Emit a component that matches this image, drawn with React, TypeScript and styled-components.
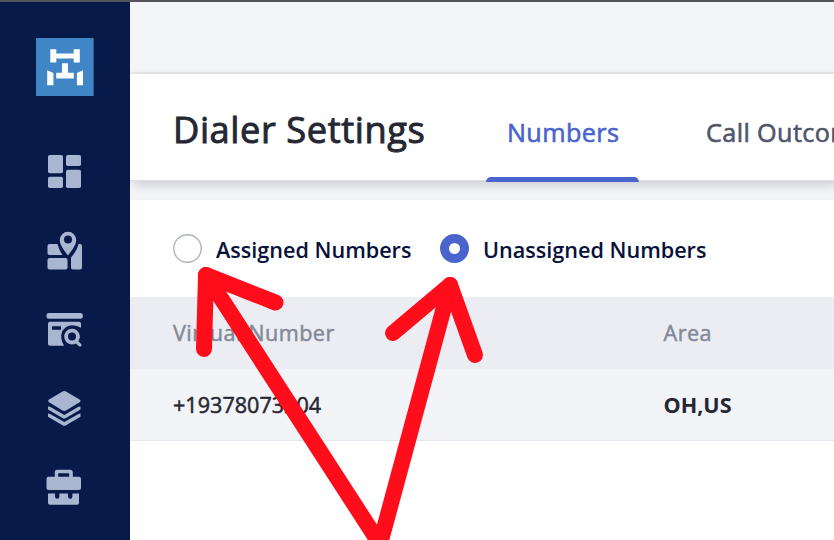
import React from "react";
import styled, { createGlobalStyle } from "styled-components";

const GlobalStyle = createGlobalStyle`
  * { box-sizing: border-box; }
  html, body { margin: 0; overflow: hidden; }
  body { font-family: "Open Sans", sans-serif; background: #fff; }
`;

const Page = styled.div`
  position: relative;
  display: flex;
  width: 834px;
  height: 540px;
  overflow: hidden;
  border-top: 2px solid #555557;
`;

const Sidebar = styled.nav`
  flex: 0 0 130px;
  display: flex;
  flex-direction: column;
  background: #071a4a;
  padding-top: 36px;
`;

const Logo = styled.svg`
  width: 58px;
  height: 58px;
  margin-left: 36px;
  margin-bottom: 36px;
  flex: none;
`;

const NavItem = styled.a`
  display: flex;
  align-items: center;
  height: 79px;
  padding-left: 44px;
  flex: none;
`;

const NavIcon = styled.svg`
  width: 40px;
  height: 41px;
  fill: #a9b6d2;
`;

const Main = styled.main`
  flex: 1;
  min-width: 0;
  display: flex;
  flex-direction: column;
  background: #f4f5f8;
  overflow: hidden;
`;

const TopBar = styled.div`
  height: 72px;
  flex: none;
  border-bottom: 2px solid #e8e8eb;
`;

const Header = styled.header`
  display: flex;
  flex: none;
  height: 107px;
  background: #fff;
  border-bottom: 1px solid #dedee3;
  box-shadow: 4px 4px 10px rgba(40, 40, 60, 0.2);
  padding-left: 43px;
  margin-bottom: 19px;
`;

const Title = styled.h1`
  width: 313px;
  flex: none;
  margin: 0;
  color: #252733;
  font-size: 36.3px;
  font-weight: 500;
  letter-spacing: 0.55px;
  line-height: 110px;
  -webkit-text-stroke: 0.9px currentColor;
  white-space: nowrap;
`;

const Tab = styled.a<{ $active?: boolean }>`
  flex: none;
  display: flex;
  flex-direction: column;
  justify-content: space-between;
  width: ${(p) => (p.$active ? 153 : 200)}px;
  margin-right: 46px;
  height: 108px;
  padding-left: 21px;
  color: ${(p) => (p.$active ? "#4a64ce" : "#4f566c")};
  font-size: 25.2px;
  font-weight: 500;
  letter-spacing: 0.4px;
  line-height: 117px;
  white-space: nowrap;
  &::after {
    content: "";
    display: ${(p) => (p.$active ? "block" : "none")};
    height: 5px;
    flex: none;
    margin-left: -21px;
    border-radius: 5px 5px 0 0;
    background: #4a64ce;
  }
`;

const TabLabel = styled.span`
  height: 100px;
  -webkit-text-stroke: 0.6px currentColor;
`;

const Panel = styled.section`
  flex: 1;
  background: #fff;
`;

const RadioGroup = styled.div`
  display: flex;
  height: 97px;
  padding: 0 43px;
`;

const RadioOption = styled.label<{ $width: number }>`
  display: flex;
  align-items: center;
  width: ${(p) => p.$width}px;
  color: #07113a;
  font-size: 21.6px;
  font-weight: 600;
  white-space: nowrap;
`;

const RadioDot = styled.span<{ $checked?: boolean }>`
  flex: none;
  width: 29px;
  height: 29px;
  margin-right: 14px;
  border-radius: 50%;
  background: #fff;
  border: ${(p) => (p.$checked ? "9px solid #4a64ce" : "0 solid transparent")};
  box-shadow: ${(p) => (p.$checked ? "none" : "inset 0 0 0 1.4px #b0b4c0")};
`;

const RadioText = styled.span`
  padding-top: 1px;
`;

const Row = styled.div<{ $head?: boolean }>`
  display: grid;
  grid-template-columns: 490.5px 1fr;
  align-items: center;
  height: 72px;
  padding-left: 43px;
  padding-bottom: ${(p) => (p.$head ? "2px" : "0")};
  background: ${(p) => (p.$head ? "#ecedf3" : "#f3f4f8")};
  border-bottom: ${(p) => (p.$head ? "0" : "1px solid #e3e8ee")};
  color: ${(p) => (p.$head ? "#838998" : "#252733")};
  font-size: 21.6px;
  font-weight: 500;
  letter-spacing: ${(p) => (p.$head ? "0.5px" : "0")};
`;

const Cell = styled.span<{ $bold?: boolean }>`
  font-weight: ${(p) => (p.$bold ? 700 : "inherit")};
  -webkit-text-stroke: ${(p) => (p.$bold ? "0" : "0.5px currentColor")};
  white-space: nowrap;
`;

const Arrows = styled.svg`
  position: absolute;
  left: 0;
  top: -2px;
  width: 834px;
  height: 540px;
  pointer-events: none;
  fill: none;
  stroke: #ff0d1a;
  stroke-width: 16;
  stroke-linecap: round;
  stroke-linejoin: round;
`;

const icons: { name: string; box: string; art: React.ReactNode }[] = [
  {
    name: "Dashboard",
    box: "44 151 40 41",
    art: (
      <>
        <rect x="48" y="155" width="15" height="18.3" rx="1.8" />
        <rect x="66" y="155" width="15" height="11" rx="1.8" />
        <rect x="48" y="176.8" width="15" height="11.2" rx="1.8" />
        <rect x="66" y="169.8" width="15" height="18.2" rx="1.8" />
      </>
    ),
  },
  {
    name: "Map",
    box: "44 230 40 41",
    art: (
      <>
        <path d="M49.5 244H57.5Q59 250 62.5 255H49.5Q47.5 255 47.5 253V246Q47.5 244 49.5 244Z" />
        <rect x="47.5" y="258" width="20" height="11.6" rx="2" />
        <path d="M78.5 244H80Q82 244 82 246V267.6Q82 269.6 80 269.6H73Q71 269.6 71 267.6V257.5Q77 250.5 78.5 244Z" />
        <path
          fillRule="evenodd"
          d="M68 231.8A8.2 8.2 0 0 0 59.8 240C59.8 245.8 65.8 252.3 68 255.5C70.2 252.3 76.2 245.8 76.2 240A8.2 8.2 0 0 0 68 231.8ZM68 235.6A4 4 0 1 1 68 243.6A4 4 0 1 1 68 235.6Z"
        />
      </>
    ),
  },
  {
    name: "Property search",
    box: "44 309 40 41",
    art: (
      <>
        <rect x="46.5" y="313" width="36.3" height="5.8" rx="2.5" />
        <path
          fillRule="evenodd"
          d="M50 321.8H79Q81 321.8 81 323.8V327.8Q77.5 325.2 72 325.2Q66 325.5 62.3 331Q59.5 338 64 345.8H50Q48 345.8 48 343.8V323.8Q48 321.8 50 321.8ZM52 326.3V329.8H61V326.3Z"
        />
        <path
          fillRule="evenodd"
          d="M72 328.8A7.8 7.8 0 1 0 75.8 343.4L79 346.3Q80.4 347 81.3 346Q82 345 81.2 344L78.3 341.2A7.8 7.8 0 0 0 72 328.8ZM72 332.6A4 4 0 1 1 72 340.6A4 4 0 1 1 72 332.6Z"
        />
      </>
    ),
  },
  {
    name: "Layers",
    box: "44 388 40 41",
    art: (
      <>
        <path d="M62.5 391.5Q64.3 390.5 66 391.5L80 399.8Q81.3 401 80 402.1L66 410.5Q64.3 411.4 62.5 410.5L48.7 402.1Q47.5 401 48.7 399.8Z" />
        <path d="M48 406.5L50 406.8L64.3 415L78.5 406.8L80.5 406.5V409.5L66 418Q64.3 419 62.5 418L48 409.5Z" />
        <path d="M48 413.6L50 413.9L64.3 422L78.5 413.9L80.5 413.6V416.8L66 425.3Q64.3 426.3 62.5 425.3L48 416.8Z" />
      </>
    ),
  },
  {
    name: "Toolbox",
    box: "44 467 40 41",
    art: (
      <>
        <path
          fillRule="evenodd"
          d="M57 469.8H70Q72.8 469.8 72.8 472.6V476.8H79Q81 476.8 81 478.8V488Q81 490 79 490H48.5Q46.5 490 46.5 488V478.8Q46.5 476.8 48.5 476.8H54.8V472.6Q54.8 469.8 57 469.8ZM58.2 473.2V476.8H69.2V473.2Z"
        />
        <path d="M48 493.5H55V496.5A2.2 2.2 0 0 0 59.4 496.5V493.5H68V496.5A2.2 2.2 0 0 0 72.4 496.5V493.5H79V502.8Q79 504.8 77 504.8H50Q48 504.8 48 502.8Z" />
      </>
    ),
  },
];

export default function App() {
  return (
    <>
      <GlobalStyle />
      <Page>
        <Sidebar>
          <Logo viewBox="36 38 58 58">
            <path fill="#4085c5" d="M36 38H93.6V96H36Z" />
            <path
              fill="#fff"
              d="M50.3 49.2H56.3V53.5H73.7V49.2H79.8V62.5H73.7V58.5H56.3V62.5H50.3ZM62 63.3H68V72.8H73.8V78.4H56.2V72.8H62ZM47.2 70.3L53.4 73V85.3H47.2ZM83 70.3V85.3H76.9V73Z"
            />
          </Logo>
          {icons.map((i) => (
            <NavItem key={i.name} aria-label={i.name}>
              <NavIcon viewBox={i.box}>{i.art}</NavIcon>
            </NavItem>
          ))}
        </Sidebar>
        <Main>
          <TopBar />
          <Header>
            <Title>Dialer Settings</Title>
            <Tab $active>
              <TabLabel>Numbers</TabLabel>
            </Tab>
            <Tab>
              <TabLabel>Call Outcomes</TabLabel>
            </Tab>
          </Header>
          <Panel>
            <RadioGroup>
              <RadioOption $width={267}>
                <RadioDot />
                <RadioText>Assigned Numbers</RadioText>
              </RadioOption>
              <RadioOption $width={280}>
                <RadioDot $checked />
                <RadioText>Unassigned Numbers</RadioText>
              </RadioOption>
            </RadioGroup>
            <Row $head>
              <Cell>Virtual Number</Cell>
              <Cell>Area</Cell>
            </Row>
            <Row>
              <Cell>+19378073204</Cell>
              <Cell $bold>OH,US</Cell>
            </Row>
          </Panel>
        </Main>
        <Arrows viewBox="0 0 834 540">
          <path d="M275.5 302.5L206 275L204 349" />
          <path d="M206 275L380 544L450 285" />
          <path d="M393 333L450 285L475 355" />
        </Arrows>
      </Page>
    </>
  );
}
